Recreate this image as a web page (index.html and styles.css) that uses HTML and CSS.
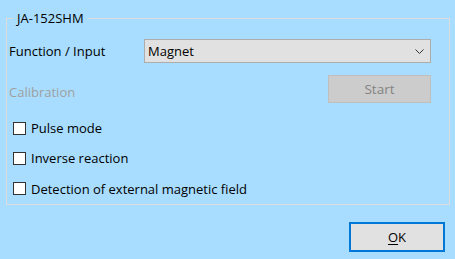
FILE: index.html
```html
<!DOCTYPE html>
<html lang="en">
<head>
    <meta charset="UTF-8">
    <meta name="viewport" content="width=device-width, initial-scale=1.0">
    <title>JA-152SHM</title>
    <link rel="stylesheet" href="styles.css">
</head>
<body>
    <fieldset class="group">
        <legend>JA-152SHM</legend>

        <div class="row">
            <span class="label">Function / Input</span>
            <div class="combo">
                <span>Magnet</span>
                <svg class="chevron" width="9" height="5" viewBox="0 0 9 5">
                    <path d="M0.5 0.5 L4.5 4.5 L8.5 0.5" fill="none" stroke="#333" stroke-width="1"/>
                </svg>
            </div>
        </div>

        <div class="row row-cal">
            <span class="label disabled">Calibration</span>
            <button class="btn-start" disabled>Start</button>
        </div>

        <div class="checks">
            <label class="check"><span class="box"></span>Pulse mode</label>
            <label class="check"><span class="box"></span>Inverse reaction</label>
            <label class="check"><span class="box"></span>Detection of external magnetic field</label>
        </div>
    </fieldset>

    <div class="footer">
        <button class="btn-ok"><u>O</u>K</button>
    </div>
</body>
</html>
```

FILE: styles.css
```css
* {
    margin: 0;
    padding: 0;
    box-sizing: border-box;
}
body {
    background: #a8ddff;
    font-family: "Open Sans", "Noto Sans", sans-serif;
    font-size: 13px;
    color: #000;
    width: 455px;
    height: 259px;
    overflow: hidden;
}
.group {
    margin: 10px 0 0 6px;
    width: 444px;
    border: 1px solid #dcdcdc;
    padding: 0 0 0 2px;
}
.group legend {
    margin-left: 4px;
    padding: 0 4px;
    line-height: 16px;
    font-size: 13px;
}
.row {
    display: flex;
    justify-content: space-between;
    width: 422px;
    height: 24px;
    margin-top: 13px;
}
.label {
    width: 135px;
    line-height: 24px;
}
.label.disabled {
    color: #a0a0a0;
    padding-top: 5px;
}
.combo {
    width: 287px;
    height: 24px;
    background: #e1e1e1;
    border: 1px solid #adadad;
    display: flex;
    align-items: center;
    justify-content: space-between;
    padding: 0 6px 0 3px;
}
.chevron {
    display: block;
}
.row-cal {
    height: 28px;
    margin-top: 12px;
}
.btn-start {
    width: 103px;
    height: 28px;
    background: #cccccc;
    border: 1px solid #bfbfbf;
    color: #838383;
    font-family: inherit;
    font-size: 13.5px;
}
.checks {
    margin-top: 10px;
    display: flex;
    flex-direction: column;
}
.check {
    display: flex;
    align-items: center;
    height: 30px;
    padding-left: 4px;
}
.check:last-child {
    height: 31px;
}
.box {
    width: 13px;
    height: 13px;
    background: #fff;
    border: 1px solid #333;
    margin-right: 5px;
}
.footer {
    display: flex;
    justify-content: flex-end;
    padding: 17px 10px 0 0;
}
.btn-ok {
    width: 96px;
    height: 30px;
    background: #e1e1e1;
    border: 2px solid #0078d7;
    font-family: inherit;
    font-size: 13px;
    color: #000;
}
.btn-ok u {
    text-decoration-thickness: 1px;
    text-underline-offset: 2px;
}
```
